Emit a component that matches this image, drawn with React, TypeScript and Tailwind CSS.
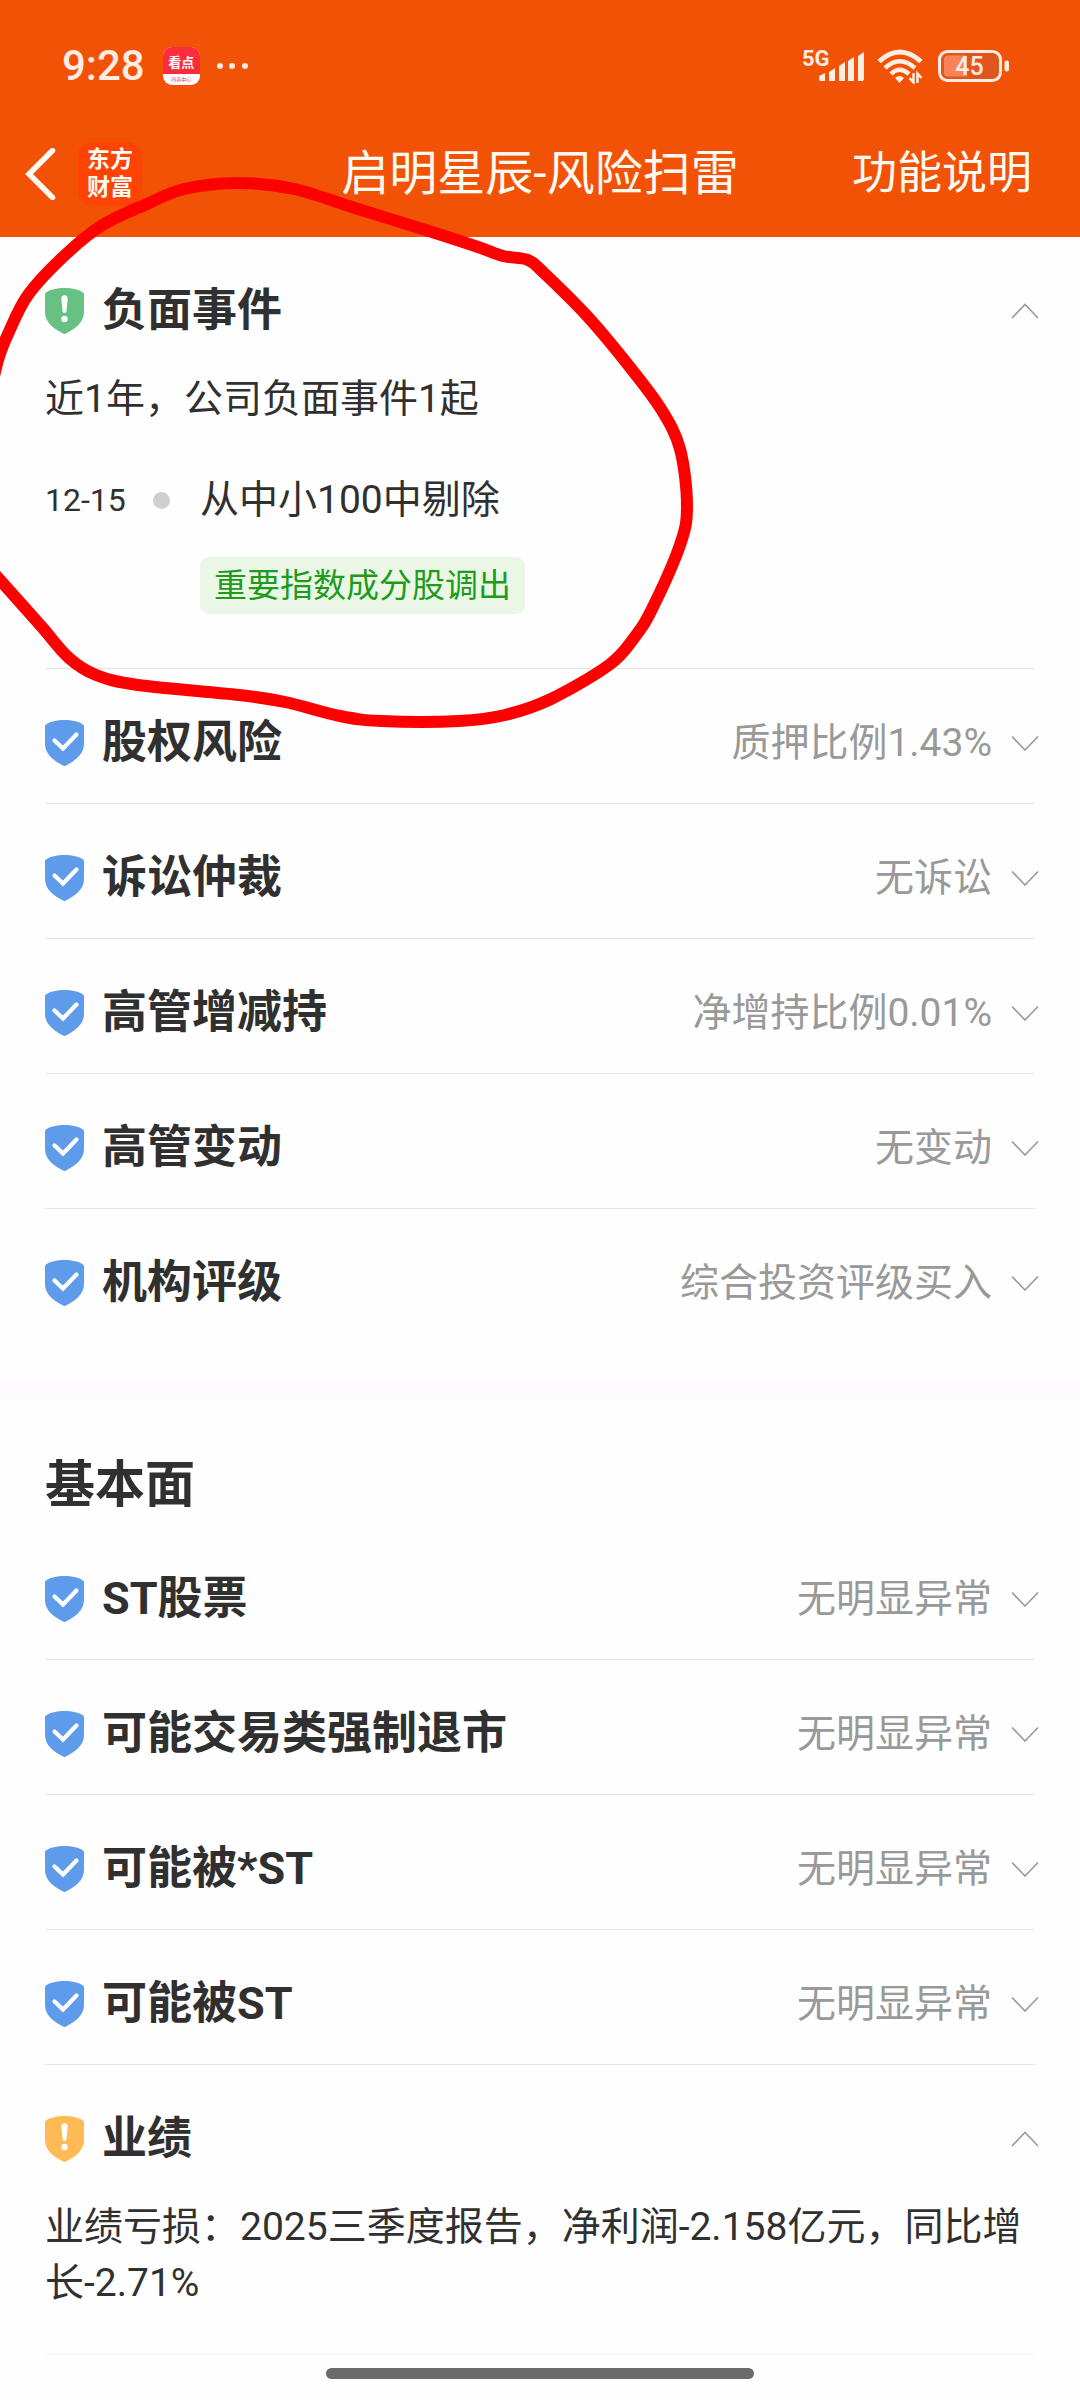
import { useState, type ReactNode } from 'react';

type Level = 'safe' | 'notice' | 'warn';

type RiskItem = {
    title: string;
    level: Level;
    value?: string;
    body?: ReactNode;
};

const shieldColors: Record<Level, string> = {
    safe: 'text-[#5e9bea]',
    notice: 'text-[#66c183]',
    warn: 'text-[#ffb955]',
};

// Outline of the pen mark around the first card
const penPoints: [number, number][] = [
    [-10, 395], [-2, 360], [8, 334], [28, 295], [64, 256], [101, 226], [147, 204], [184, 189],
    [239, 183], [294, 189], [358, 209], [432, 232], [478, 247], [503, 256], [528, 260],
    [544, 273], [588, 317], [629, 366], [661, 409], [680, 449], [687, 506], [680, 545],
    [652, 609], [634, 638], [609, 665], [551, 699], [505, 715], [459, 721], [381, 721], [340, 716],
    [285, 702], [239, 695], [138, 685], [96, 675], [69, 658], [41, 626], [0, 580], [-12, 567],
];

// Catmull-Rom spline through all points
function smoothPath(points: [number, number][]) {
    let d = `M${points[0][0]} ${points[0][1]}`;
    for (let i = 0; i < points.length - 1; i++) {
        const p0 = points[Math.max(i - 1, 0)];
        const p1 = points[i];
        const p2 = points[i + 1];
        const p3 = points[Math.min(i + 2, points.length - 1)];
        const c1 = [p1[0] + (p2[0] - p0[0]) / 6, p1[1] + (p2[1] - p0[1]) / 6];
        const c2 = [p2[0] - (p3[0] - p1[0]) / 6, p2[1] - (p3[1] - p1[1]) / 6];
        d += ` C${c1[0]} ${c1[1]} ${c2[0]} ${c2[1]} ${p2[0]} ${p2[1]}`;
    }
    return d;
}

function Shield({ level }: { level: Level }) {
    return (
        <svg className={`w-[39px] h-[46px] shrink-0 ${shieldColors[level]}`} viewBox="0 0 39 46" aria-hidden="true">
            <path
                fill="currentColor"
                d="M19.5 0C27 0 34 1.500 38 4.500Q39 5.200 39 6.500V24C39 34 30.500 40.500 21 45.500Q19.500 46.300 18 45.500C8.500 40.500 0 34 0 24V6.500Q0 5.200 1 4.500C5 1.500 12 0 19.500 0Z"
            />
            {level === 'safe' ? (
                <path
                    d="M9.500 20.500L18 28.500L31.500 14.500"
                    fill="none"
                    stroke="#fff"
                    strokeWidth="4.2"
                    strokeLinecap="round"
                />
            ) : (
                <>
                    <path d="M16.300 10.500a3.200 3.200 0 0 1 6.400 0L21.500 23a2 2 0 0 1-4 0Z" fill="#fff" />
                    <circle cx="19.500" cy="31" r="3.200" fill="#fff" />
                </>
            )}
        </svg>
    );
}

function Chevron({ up }: { up: boolean }) {
    return (
        <svg
            className="w-7 h-4 -mr-1 shrink-0"
            viewBox="0 0 28 16"
            fill="none"
            stroke="#999"
            strokeWidth="1.600"
            aria-hidden="true"
        >
            <path d={up ? 'M1 15L14 1.500L27 15' : 'M1 1.500L14 15L27 1.500'} />
        </svg>
    );
}

function StatusBar() {
    return (
        <div className="flex h-[52px] items-center justify-between pl-[62px] pr-[71px] text-[#ffece3]">
            <div className="flex items-center">
                <span className="text-[42px] leading-[52px] font-medium">9:28</span>
                <div className="ml-[18px] flex h-[38px] w-[37px] flex-col overflow-hidden rounded-[9px] bg-white text-center">
                    <span className="bg-[#fb2c3c] pt-1 text-[13px] leading-[23px] font-bold text-white">看点</span>
                    <span className="text-[5px] leading-[10px] text-[#d33]">内容中心</span>
                </div>
                <svg className="ml-4 w-8 h-2" viewBox="0 0 32 8" fill="currentColor" aria-hidden="true">
                    <circle cx="4" cy="4" r="3" />
                    <circle cx="16" cy="4" r="3" />
                    <circle cx="29" cy="4" r="3" />
                </svg>
            </div>
            <div className="flex items-center">
                <svg className="w-[64px] h-11" viewBox="-3 -4 64 44" fill="currentColor" aria-label="5G">
                    <text x="-1" y="18" fontSize="22" fontWeight="700">5G</text>
                    <path d="M16 28l6-3v8h-4q-2 0-2-2zM26 24l6-4v13h-6zM36 18l6-4v19h-6zM45 13l6-4v24h-6zM55 8l6-4v27q0 2-2 2h-4z" />
                </svg>
                <svg className="ml-[13px] w-[46px] h-9" viewBox="0 0 46 36" fill="none" stroke="currentColor" aria-hidden="true">
                    <path d="M2 13.500Q22.500-5.500 44 13.500" strokeWidth="5" />
                    <path d="M8 20Q22.500 6.500 38 20" strokeWidth="4.500" />
                    <path d="M14 26Q22.500 17.500 32 26" strokeWidth="4.500" />
                    <path d="M18 30q4.500-4 9 0l-4.500 5z" fill="currentColor" stroke="none" />
                    <path d="M36.500 25v9.500L32.500 30M40.500 35v-9.500L44.500 30" strokeWidth="2.500" />
                </svg>
                <svg className="ml-[15px] w-[71px] h-8" viewBox="0 0 71 32" fill="currentColor" aria-label="45%">
                    <rect x="1.500" y="1.500" width="61" height="29" rx="8" fill="#e0561c" stroke="currentColor" strokeWidth="3" />
                    <path d="M10 5.500h19v21H10q-4 0-4-4v-13q0-4 4-4z" fill="#f98357" />
                    <rect x="66.500" y="10.500" width="4.500" height="11" rx="2" />
                    <text x="31.500" y="25" fontSize="25" fontWeight="500" textAnchor="middle">45</text>
                </svg>
            </div>
        </div>
    );
}

function Header() {
    return (
        <header className="bg-[#f15205] pt-10">
            <StatusBar />
            <nav className="mt-[19px] grid h-[126px] grid-cols-[1fr_auto_1fr] items-center px-6 leading-[60px] text-[#fffaf3]">
                <div className="flex items-center gap-[22px]">
                    <button type="button" aria-label="返回">
                        <svg className="w-8 h-[52px]" viewBox="0 0 32 52" fill="none" stroke="currentColor" strokeWidth="5.500" aria-hidden="true">
                            <path d="M28.500 2.500L5 26L28.500 49.500" strokeLinecap="round" />
                        </svg>
                    </button>
                    <div className="flex h-16 w-16 items-center justify-center rounded-[14px] bg-[#ff4302] text-center text-[23px] leading-[28px] font-bold">
                        <span>
                            东方
                            <br />
                            财富
                        </span>
                    </div>
                </div>
                <h1 className="text-[48px]">启明星辰-风险扫雷</h1>
                <a href="#help" className="mr-6 justify-self-end text-[45px]">
                    功能说明
                </a>
            </nav>
        </header>
    );
}

function RiskRow({ item }: { item: RiskItem }) {
    const [open, setOpen] = useState(Boolean(item.body));

    return (
        <li>
            <button
                type="button"
                aria-expanded={open}
                onClick={() => setOpen(!open)}
                className="flex h-[134px] w-full items-center pt-[14px] text-left"
            >
                <Shield level={item.level} />
                <span className="ml-[18px] text-[45px] leading-[60px] font-bold">{item.title}</span>
                <span className="ml-auto mr-[19px] text-[39px] leading-[56px] text-[#999]">{item.value}</span>
                <Chevron up={open} />
            </button>
            {open && item.body}
        </li>
    );
}

const negativeEvents = (
    <div className="pb-[54px] text-[39px] leading-[56px]">
        <p>近1年，公司负面事件1起</p>
        <div className="mt-[45px] flex items-center">
            <time className="w-[108px] text-[32px]">12-15</time>
            <span className="size-[17px] rounded-full bg-[#cfcfcf]" />
            <span className="ml-[30px]">从中小100中剔除</span>
        </div>
        <div className="mt-[29px] ml-[155px] flex">
            <span className="rounded-[9px] bg-[#ebf7e6] px-[14px] text-[33px] leading-[57px] text-[#1e9b1b]">
                重要指数成分股调出
            </span>
        </div>
    </div>
);

const riskItems: RiskItem[] = [
    { title: '负面事件', level: 'notice', body: negativeEvents },
    { title: '股权风险', level: 'safe', value: '质押比例1.43%' },
    { title: '诉讼仲裁', level: 'safe', value: '无诉讼' },
    { title: '高管增减持', level: 'safe', value: '净增持比例0.01%' },
    { title: '高管变动', level: 'safe', value: '无变动' },
    { title: '机构评级', level: 'safe', value: '综合投资评级买入' },
];

const basicItems: RiskItem[] = [
    { title: 'ST股票', level: 'safe', value: '无明显异常' },
    { title: '可能交易类强制退市', level: 'safe', value: '无明显异常' },
    { title: '可能被*ST', level: 'safe', value: '无明显异常' },
    { title: '可能被ST', level: 'safe', value: '无明显异常' },
    {
        title: '业绩',
        level: 'warn',
        body: (
            <p className="pb-[43px] text-[39px] leading-[56px]">
                业绩亏损：2025三季度报告，净利润-2.158亿元，同比增长-2.71%
            </p>
        ),
    },
];

export default function App() {
    return (
        <div className="relative min-h-screen overflow-hidden bg-[#fefefe] font-['Roboto','Noto_Sans_CJK_SC',sans-serif] text-[#303030]">
            <Header />
            <main>
                <section className="px-[45px] pb-9">
                    <ul className="divide-y divide-[#e5e5e5]">
                        {riskItems.map((item) => (
                            <RiskRow key={item.title} item={item} />
                        ))}
                    </ul>
                </section>
                <div className="h-[22px] bg-[#fefbff]" />
                <section className="px-[45px]">
                    <h2 className="pt-[52px] pb-2 text-[50px] leading-[64px] font-bold">基本面</h2>
                    <ul className="divide-y divide-[#e5e5e5]">
                        {basicItems.map((item) => (
                            <RiskRow key={item.title} item={item} />
                        ))}
                    </ul>
                    <hr className="border-[#f5f5f5]" />
                </section>
            </main>
            <div className="mx-auto mt-[13px] mb-5 h-[11px] w-[428px] rounded-full bg-[#6d6a6e]" />

            {/* Pen mark */}
            <svg
                className="pointer-events-none absolute top-0 left-0 h-[740px] w-[700px]"
                viewBox="0 0 700 740"
                fill="none"
                aria-hidden="true"
            >
                <path d={smoothPath(penPoints)} stroke="#ff0000" strokeWidth="12" strokeLinejoin="round" />
            </svg>
        </div>
    );
}
